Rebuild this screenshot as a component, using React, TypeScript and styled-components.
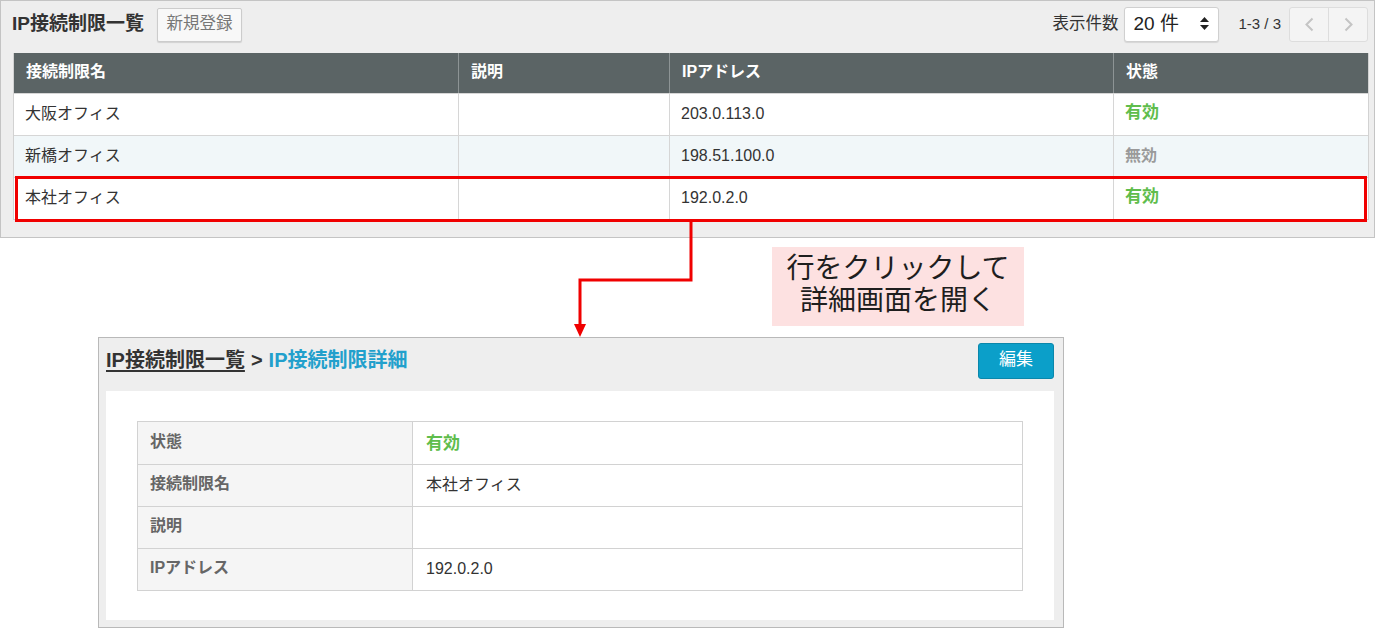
import React from 'react';
import styled, { createGlobalStyle } from 'styled-components';

const GlobalStyle = createGlobalStyle`
  body {
    margin: 0;
    background: #ffffff;
    font-family: "Liberation Sans", "Noto Sans CJK JP", sans-serif;
    color: #333333;
    line-height: 1;
  }
`;

const Page = styled.div`
  position: relative;
  width: 1376px;
  height: 628px;
  overflow: hidden;
  background: #ffffff;
`;

/* ---------- list panel ---------- */

const ListPanel = styled.section`
  width: 1375px;
  box-sizing: border-box;
  background: #eeeeee;
  border: 1px solid #c4c4c4;
  padding: 6px 6px 17px 11px;
`;

const Toolbar = styled.div`
  display: flex;
  align-items: center;
  justify-content: space-between;
  height: 35px;
  margin-bottom: 11px;
`;

const ToolGroup = styled.div<{ $gap: number }>`
  display: flex;
  align-items: center;
  gap: ${(p) => p.$gap}px;
`;

const PanelTitle = styled.h1`
  margin: 0 0 2px 0;
  font-size: 19px;
  font-weight: bold;
  line-height: 1;
  color: #333333;
`;

const PlainButton = styled.button`
  height: 34px;
  width: 85px;
  padding: 0 0 2px 0;
  background: #f8f8f8;
  border: 1px solid #cccccc;
  border-radius: 2px;
  box-shadow: 0 1px 1px rgba(0, 0, 0, 0.12);
  font-family: inherit;
  font-size: 16.5px;
  line-height: 1;
  color: #777777;
`;

const CountLabel = styled.span`
  font-size: 16.5px;
  color: #333333;
  padding-bottom: 2px;
  margin-right: 2px;
`;

const SelectBox = styled.div`
  display: flex;
  align-items: center;
  justify-content: space-between;
  box-sizing: border-box;
  width: 95px;
  height: 35px;
  padding: 0 9px 2px 8px;
  margin-left: 4px;
  background: #ffffff;
  border: 1px solid #d0d0d0;
  border-radius: 3px;
  box-shadow: 0 1px 1px rgba(0, 0, 0, 0.1);
  font-size: 19px;
  color: #222222;
`;

const PageInfo = styled.span`
  font-size: 15px;
  color: #333333;
  margin-left: 19px;
  padding-bottom: 3px;
`;

const Pager = styled.div`
  display: flex;
  margin-left: 8px;
  border: 1px solid #dddddd;
  border-radius: 3px;
  background: #f4f4f4;
`;

const PagerButton = styled.div<{ $first?: boolean }>`
  width: 38px;
  height: 33px;
  display: flex;
  align-items: center;
  justify-content: center;
  border-left: ${(p) => (p.$first ? 'none' : '1px solid #dddddd')};
`;

const ListTable = styled.div`
  width: 1356px;
  margin-left: 1px;
  border: 1px solid #d2d2d2;
  border-top: none;
  box-sizing: border-box;
`;

const columns = '445px 211px 444px 1fr';

const HeadRow = styled.div`
  display: grid;
  grid-template-columns: ${columns};
  height: 40px;
  background: #5b6465;
`;

const HeadCell = styled.div`
  display: flex;
  align-items: center;
  padding: 0 0 2px 12px;
  font-size: 16px;
  font-weight: bold;
  color: #ffffff;
  border-right: 1px solid #8d9495;
  &:last-child {
    border-right: none;
  }
`;

const BodyRow = styled.div<{ $striped?: boolean; $picked?: boolean }>`
  position: relative;
  display: grid;
  grid-template-columns: ${columns};
  height: 42px;
  box-sizing: border-box;
  border-top: 1px solid #d6d6d6;
  background: ${(p) => (p.$striped ? '#f1f7f9' : '#ffffff')};
  &::after {
    content: '';
    display: ${(p) => (p.$picked ? 'block' : 'none')};
    position: absolute;
    top: -2px;
    bottom: -3px;
    left: 1px;
    right: 1px;
    border: 3px solid #f00000;
    pointer-events: none;
  }
`;

const Cell = styled.div`
  display: flex;
  align-items: center;
  padding: 0 0 2px 11px;
  font-size: 16px;
  color: #333333;
  border-right: 1px solid #d6d6d6;
  &:last-child {
    border-right: none;
  }
`;

const StatusText = styled.span<{ $active: boolean }>`
  font-weight: bold;
  font-size: ${(p) => (p.$active ? '17px' : '16px')};
  padding-bottom: ${(p) => (p.$active ? '2px' : '0')};
  color: ${(p) => (p.$active ? '#5fbd4c' : '#9a9a9a')};
`;

/* ---------- annotation ---------- */

const AnnotationRow = styled.div`
  height: 99px;
  box-sizing: border-box;
  padding: 9px 0 0 772px;
`;

const Callout = styled.div`
  width: 252px;
  height: 79px;
  box-sizing: border-box;
  padding-top: 3px;
  background: #fde1e1;
  font-family: "Noto Sans CJK JP", sans-serif;
  font-size: 28px;
  line-height: 32px;
  text-align: center;
  color: #1e1e1e;
`;

const Connector = styled.svg`
  position: absolute;
  left: 0;
  top: 0;
  pointer-events: none;
`;

/* ---------- detail panel ---------- */

const DetailRow = styled.div`
  padding-left: 98px;
`;

const DetailPanel = styled.section`
  width: 966px;
  height: 291px;
  box-sizing: border-box;
  background: #eeeeee;
  border: 1px solid #b9b9b9;
  padding: 5px 9px 7px 7px;
`;

const DetailHeader = styled.div`
  display: flex;
  align-items: center;
  justify-content: space-between;
  height: 36px;
  margin-bottom: 12px;
`;

const Breadcrumb = styled.div`
  font-size: 20px;
  font-weight: bold;
  padding-bottom: 3px;
`;

const CrumbLink = styled.a`
  color: #333333;
  text-decoration: underline;
  text-underline-offset: 3px;
`;

const CrumbSep = styled.span`
  color: #333333;
  margin: 0 6px;
`;

const CrumbCurrent = styled.span`
  color: #22a0cc;
`;

const EditButton = styled.button`
  width: 76px;
  height: 36px;
  padding: 0 0 3px 0;
  background: #0b9fc9;
  border: 1px solid #0a87ab;
  border-radius: 3px;
  font-family: inherit;
  font-size: 17px;
  line-height: 1;
  color: #ffffff;
`;

const DetailBody = styled.div`
  background: #ffffff;
  padding: 30px 31px 29px;
`;

const InfoTable = styled.div`
  border: 1px solid #d2d2d2;
`;

const InfoRow = styled.div`
  display: grid;
  grid-template-columns: 275px 1fr;
  height: 41px;
  border-top: 1px solid #d2d2d2;
  &:first-child {
    border-top: none;
    height: 42px;
  }
`;

const InfoLabel = styled.div`
  display: flex;
  align-items: center;
  padding: 0 0 3px 12px;
  background: #f5f5f5;
  border-right: 1px solid #d2d2d2;
  font-size: 16px;
  font-weight: bold;
  color: #666666;
`;

const InfoValue = styled.div<{ $drop?: number }>`
  display: flex;
  align-items: center;
  padding-left: 13px;
  padding-top: ${(p) => p.$drop ?? 0}px;
  padding-bottom: 1px;
  font-size: 16px;
  color: #333333;
`;

const SortArrows = () => (
  <svg width="9" height="13" viewBox="0 0 9 13">
    <path d="M4.5 0 L9 5 H0 Z" fill="#222" />
    <path d="M4.5 13 L9 8 H0 Z" fill="#222" />
  </svg>
);

const Chevron = ({ dir }: { dir: 'left' | 'right' }) => (
  <svg width="9" height="15" viewBox="0 0 9 15">
    <polyline
      points={dir === 'left' ? '7.5,1.5 1.5,7.5 7.5,13.5' : '1.5,1.5 7.5,7.5 1.5,13.5'}
      fill="none"
      stroke="#c4c4c4"
      strokeWidth="2"
    />
  </svg>
);

type Office = { name: string; note: string; ip: string; active: boolean };

const offices: Office[] = [
  { name: '大阪オフィス', note: '', ip: '203.0.113.0', active: true },
  { name: '新橋オフィス', note: '', ip: '198.51.100.0', active: false },
  { name: '本社オフィス', note: '', ip: '192.0.2.0', active: true },
];

const selected = offices[2];

export default function App() {
  return (
    <Page>
      <GlobalStyle />
      <ListPanel>
        <Toolbar>
          <ToolGroup $gap={13}>
            <PanelTitle>IP接続制限一覧</PanelTitle>
            <PlainButton>新規登録</PlainButton>
          </ToolGroup>
          <ToolGroup $gap={0}>
            <CountLabel>表示件数</CountLabel>
            <SelectBox>
              <span>20 件</span>
              <SortArrows />
            </SelectBox>
            <PageInfo>1-3 / 3</PageInfo>
            <Pager>
              <PagerButton $first>
                <Chevron dir="left" />
              </PagerButton>
              <PagerButton>
                <Chevron dir="right" />
              </PagerButton>
            </Pager>
          </ToolGroup>
        </Toolbar>
        <ListTable>
          <HeadRow>
            <HeadCell>接続制限名</HeadCell>
            <HeadCell>説明</HeadCell>
            <HeadCell>IPアドレス</HeadCell>
            <HeadCell>状態</HeadCell>
          </HeadRow>
          {offices.map((o, i) => (
            <BodyRow key={o.name} $striped={i % 2 === 1} $picked={o === selected}>
              <Cell>{o.name}</Cell>
              <Cell>{o.note}</Cell>
              <Cell>{o.ip}</Cell>
              <Cell>
                <StatusText $active={o.active}>{o.active ? '有効' : '無効'}</StatusText>
              </Cell>
            </BodyRow>
          ))}
        </ListTable>
      </ListPanel>

      <AnnotationRow>
        <Callout>
          行をクリックして
          <br />
          詳細画面を開く
        </Callout>
      </AnnotationRow>

      <DetailRow>
        <DetailPanel>
          <DetailHeader>
            <Breadcrumb>
              <CrumbLink>IP接続制限一覧</CrumbLink>
              <CrumbSep>&gt;</CrumbSep>
              <CrumbCurrent>IP接続制限詳細</CrumbCurrent>
            </Breadcrumb>
            <EditButton>編集</EditButton>
          </DetailHeader>
          <DetailBody>
            <InfoTable>
              <InfoRow>
                <InfoLabel>状態</InfoLabel>
                <InfoValue $drop={4}>
                  <StatusText $active={selected.active}>有効</StatusText>
                </InfoValue>
              </InfoRow>
              <InfoRow>
                <InfoLabel>接続制限名</InfoLabel>
                <InfoValue>{selected.name}</InfoValue>
              </InfoRow>
              <InfoRow>
                <InfoLabel>説明</InfoLabel>
                <InfoValue>{selected.note}</InfoValue>
              </InfoRow>
              <InfoRow>
                <InfoLabel>IPアドレス</InfoLabel>
                <InfoValue>{selected.ip}</InfoValue>
              </InfoRow>
            </InfoTable>
          </DetailBody>
        </DetailPanel>
      </DetailRow>

      {/* arrow from the picked row down to the detail panel */}
      <Connector width="1376" height="628" viewBox="0 0 1376 628">
        <path d="M691 221 V280 H580 V326" fill="none" stroke="#f00000" strokeWidth="3" />
        <path d="M580 337 L574 324 H586 Z" fill="#f00000" />
      </Connector>
    </Page>
  );
}
